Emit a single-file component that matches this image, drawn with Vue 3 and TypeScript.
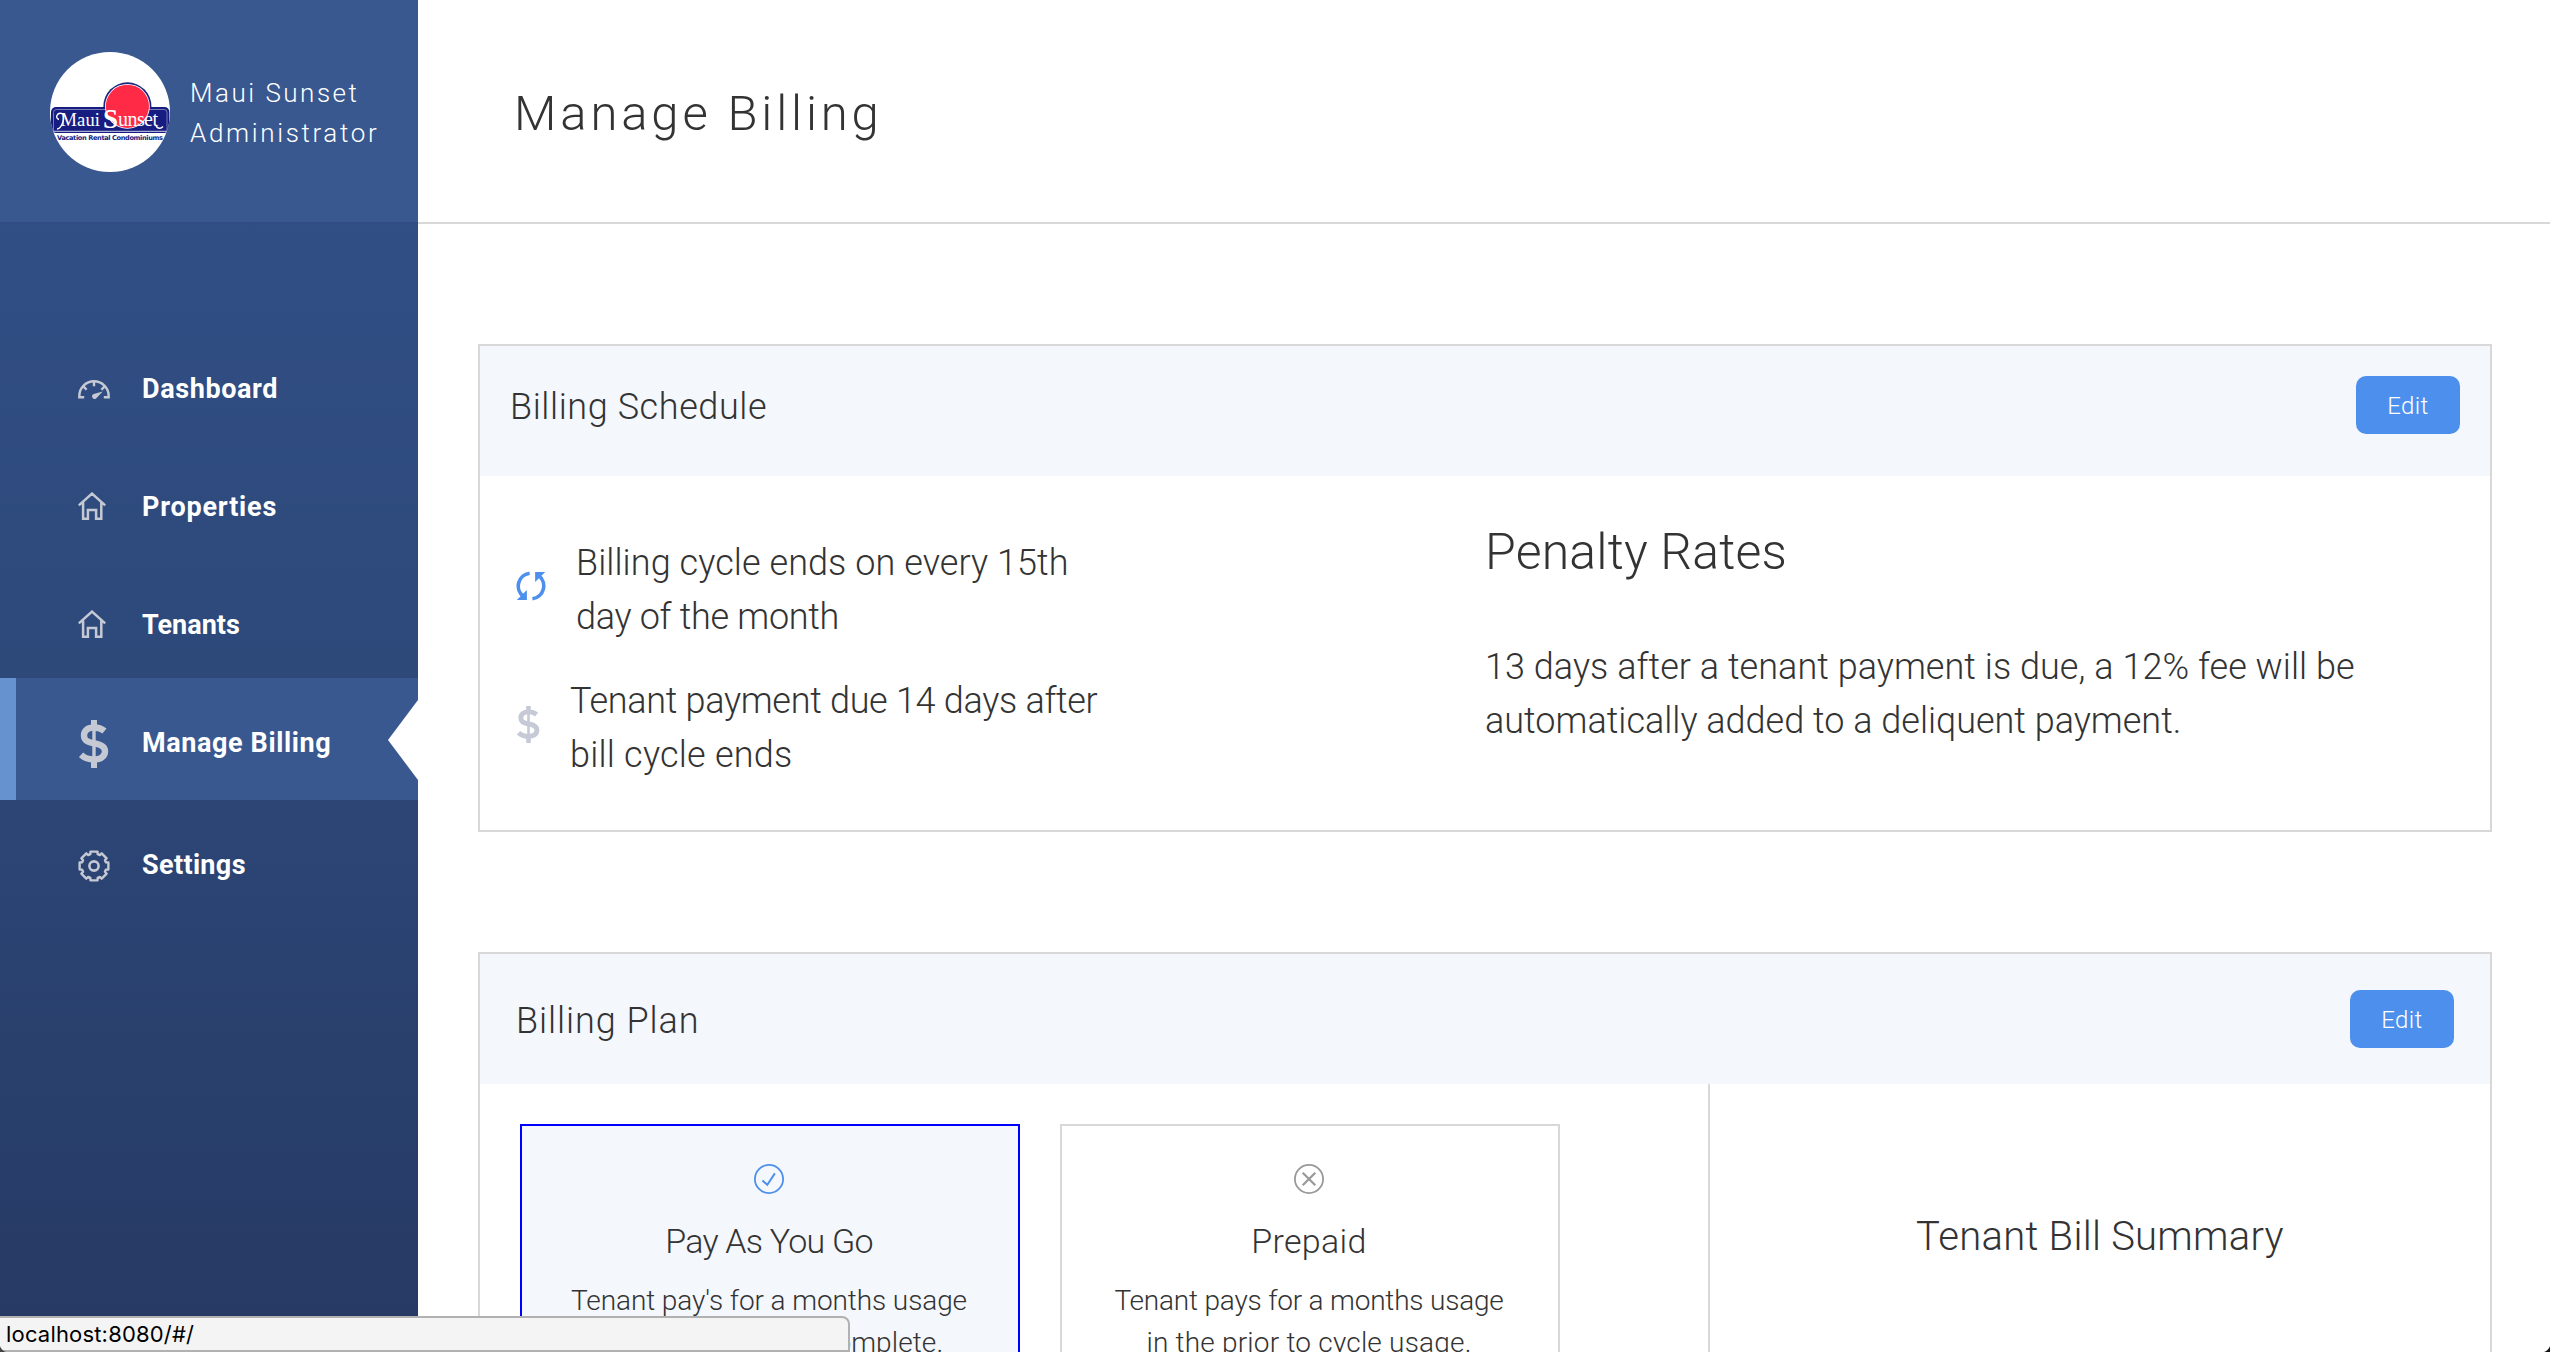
<script setup lang="ts">
type IconName = 'gauge' | 'house' | 'dollar' | 'gear'

interface NavItem {
  label: string
  icon: IconName
  active?: boolean
}

interface Plan {
  id: string
  title: string
  lines: string[]
  selected: boolean
}

const navItems: NavItem[] = [
  { label: 'Dashboard', icon: 'gauge' },
  { label: 'Properties', icon: 'house' },
  { label: 'Tenants', icon: 'house' },
  { label: 'Manage Billing', icon: 'dollar', active: true },
  { label: 'Settings', icon: 'gear' },
]

const plans: Plan[] = [
  {
    id: 'payg',
    title: 'Pay As You Go',
    lines: ["Tenant pay's for a months usage", 'after the month is complete.'],
    selected: true,
  },
  {
    id: 'prepaid',
    title: 'Prepaid',
    lines: ['Tenant pays for a months usage', 'in the prior to cycle usage.'],
    selected: false,
  },
]

// Outline of the eight-toothed gear, centred in a 32x32 box.
function gearPath(): string {
  const step = Math.PI / 4
  const points: string[] = []
  const add = (radius: number, angle: number) => {
    points.push(`${(16 + radius * Math.sin(angle)).toFixed(2)} ${(16 - radius * Math.cos(angle)).toFixed(2)}`)
  }
  for (let i = 0; i < 8; i++) {
    const a = i * step
    add(12.4, a - 0.3)
    add(14.8, a - 0.24)
    add(14.8, a + 0.24)
    add(12.4, a + 0.3)
  }
  return `M${points.join('L')}Z`
}

const gear = gearPath()
</script>

<template>
  <div class="app">
    <aside class="sidebar">
      <div class="profile">
        <svg class="logo" width="120" height="120" viewBox="0 0 120 120">
          <defs>
            <clipPath id="logo-clip"><circle cx="60" cy="60" r="60" /></clipPath>
          </defs>
          <g clip-path="url(#logo-clip)">
            <rect width="120" height="120" fill="#fff" />
            <circle cx="77.4" cy="54.3" r="24" fill="#1a237e" />
            <rect x="1" y="55" width="118.4" height="26" rx="5" fill="#161c80" />
            <path d="M3.5 79V60.5q0-3 3-3H114q3 0 3 3V79" fill="none" stroke="#8f94c4" stroke-width="0.8" />
            <path d="M1 79.3H119" stroke="#fff" stroke-width="0.8" />
            <circle cx="77.4" cy="54.3" r="22.4" fill="#fff" />
            <circle cx="77.4" cy="54.3" r="21.6" fill="#ff2a45" />
            <path d="M13 62C7 59.500 4.500 66 9 67.500M13 62C15 68 11 77 7 77M106 74C108 77 111 77 113 74.500" fill="none" stroke="#fff" stroke-width="1.400" />
            <g class="logo-name">
              <text x="10.500" y="73.500" font-size="18.500" textLength="39.500">Maui</text>
              <text x="53" y="76" font-size="27" font-weight="700" textLength="16">S</text>
              <text x="68" y="73.500" font-size="20" textLength="40">unset</text>
            </g>
            <text class="logo-tag" x="7" y="87.800" textLength="106">Vacation Rental Condominiums</text>
          </g>
        </svg>
        <div class="profile-name">
          <span class="org">Maui Sunset</span>
          <span class="role">Administrator</span>
        </div>
      </div>

      <nav class="nav">
        <a v-for="item in navItems" :key="item.label" class="nav-item" :class="[item.label.toLowerCase().replace(' ', '-'), { active: item.active }]">
          <span class="nav-icon">
            <svg v-if="item.icon === 'gauge'" width="32" height="20" viewBox="0 0 32 20">
              <path d="M6.200 17.300H1.300V16A14.700 14.700 0 0 1 30.700 16V17.300H25.800M16 1.500V6.300M5.600 6.600L8.600 9.800M26.400 6.600L23.400 9.800" fill="none" stroke="currentColor" stroke-width="2.400" />
              <path d="M24.700 11.400L15.600 14A2.600 2.600 0 1 0 17.900 18.700Z" fill="currentColor" />
            </svg>
            <svg v-else-if="item.icon === 'house'" class="house" width="28" height="28" viewBox="0 0 28 28">
              <path d="M0.800 13.400L14 1.600L27.200 13.400M5.100 10.500V26.700H9.900V18H18.100V26.700H23.300V10.500" fill="none" stroke="currentColor" stroke-width="2.500" />
            </svg>
            <svg v-else-if="item.icon === 'dollar'" class="dollar" width="30" height="48" viewBox="0 0 30 48">
              <path d="M25.500 11C22.500 8.500 19 7.500 15 7.500C9 7.500 5 10.500 5 15.500C5 20.500 8.500 22.300 15 23.300C22 24.300 26 26.300 26 31.300C26 36.800 21.500 39.500 15 39.500C9.500 39.500 5.500 38 2 34.800" fill="none" stroke="currentColor" stroke-width="6.400" />
              <path d="M12 0H18V6H16.700V42H18V48H12V42H13.300V6H12Z" fill="currentColor" />
            </svg>
            <svg v-else width="32" height="32" viewBox="0 0 32 32">
              <g fill="none" stroke="currentColor" stroke-linejoin="round">
                <path :d="gear" stroke-width="2.400" />
                <circle cx="16" cy="16" r="4.600" stroke-width="2.600" />
              </g>
            </svg>
          </span>
          <span class="nav-label">{{ item.label }}</span>
        </a>
      </nav>
    </aside>

    <main class="main">
      <header class="page-head"><h1>Manage Billing</h1></header>

      <div class="content">
        <section class="card schedule">
          <div class="card-head">
            <h2>Billing Schedule</h2>
            <button type="button" class="edit">Edit</button>
          </div>
          <div class="schedule-body">
            <div class="terms">
              <div class="term cycle">
                <svg width="30" height="30" viewBox="0 0 30 30">
                  <path d="M13.600 2.200A13 13 0 0 0 7.500 25.500" fill="none" stroke="#4d8fec" stroke-width="3.600" />
                  <path d="M0.800 28.900H10.900V19Z" fill="#4d8fec" />
                  <g transform="rotate(180 15 15)">
                    <path d="M13.600 2.200A13 13 0 0 0 7.500 25.500" fill="none" stroke="#4d8fec" stroke-width="3.600" />
                    <path d="M0.800 28.900H10.900V19Z" fill="#4d8fec" />
                  </g>
                </svg>
                <p><span class="l1">Billing cycle ends on every 15th</span><span class="l2">day of the month</span></p>
              </div>
              <div class="term due">
                <svg width="23" height="37" viewBox="0 0 30 48">
                  <path d="M25.500 11C22.500 8.500 19 7.500 15 7.500C9 7.500 5 10.500 5 15.500C5 20.500 8.500 22.300 15 23.300C22 24.300 26 26.300 26 31.300C26 36.800 21.500 39.500 15 39.500C9.500 39.500 5.500 38 2 34.800" fill="none" stroke="#c6cad6" stroke-width="6.400" />
                  <path d="M12 0H18V6H16.700V42H18V48H12V42H13.300V6H12Z" fill="#c6cad6" />
                </svg>
                <p><span class="l1">Tenant payment due 14 days after</span><span class="l2">bill cycle ends</span></p>
              </div>
            </div>
            <div class="penalty">
              <h3>Penalty Rates</h3>
              <p><span class="l1">13 days after a tenant payment is due, a 12% fee will be</span><span class="l2">automatically added to a deliquent payment.</span></p>
            </div>
          </div>
        </section>

        <section class="card plan">
          <div class="card-head">
            <h2>Billing Plan</h2>
            <button type="button" class="edit">Edit</button>
          </div>
          <div class="plan-body">
            <div class="options">
              <article v-for="plan in plans" :key="plan.id" class="option" :class="[plan.id, { selected: plan.selected }]">
                <svg width="30" height="30" viewBox="0 0 30 30" fill="none" stroke="currentColor">
                  <circle cx="15" cy="15" r="14.100" stroke-width="1.800" />
                  <path v-if="plan.selected" d="M8.400 16.500L13.300 20.800L20.900 9.400" stroke-width="1.900" />
                  <path v-else d="M8.700 8.700L21.300 21.300M21.300 8.700L8.700 21.300" stroke-width="2.200" />
                </svg>
                <h4>{{ plan.title }}</h4>
                <p><span v-for="(line, i) in plan.lines" :key="line" :class="`l${i + 1}`">{{ line }}</span></p>
              </article>
            </div>
            <div class="summary"><h3>Tenant Bill Summary</h3></div>
          </div>
        </section>
      </div>
    </main>

    <div class="status"><span>localhost:8080/#/</span></div>
    <i class="corner left"></i>
    <i class="corner right"></i>
  </div>
</template>

<style>
html,
body {
  overflow: hidden;
  background: #fff;
}
</style>

<style scoped>
.app {
  position: relative;
  display: flex;
  width: 2550px;
  height: 1352px;
  overflow: hidden;
  color: #333;
  font-family: Roboto, "Liberation Sans", sans-serif;
  font-weight: 300;
}

h1, h2, h3, h4, p {
  margin: 0;
  font-weight: 300;
}

p span {
  display: block;
  white-space: nowrap;
}

/* sidebar */
.sidebar {
  flex: none;
  width: 418px;
  background: linear-gradient(#335089, #2e4a7c 45%, #263963);
}

.profile {
  display: flex;
  align-items: flex-start;
  box-sizing: border-box;
  height: 222px;
  padding: 52px 0 0 50px;
  background: #39588f;
}

.logo {
  flex: none;
}

.logo-name {
  fill: #fff;
  font-family: "Liberation Serif", serif;
}

.logo-tag {
  fill: #161c80;
  font: 700 6.6px "DejaVu Sans", sans-serif;
}

.profile-name {
  display: flex;
  flex-direction: column;
  margin: 21px 0 0 20px;
  color: #fff;
  font-size: 26px;
  line-height: 40px;
}

.org { letter-spacing: 2.5px; }
.role { letter-spacing: 2.65px; }

.nav {
  padding-top: 102px;
}

.nav-item {
  position: relative;
  display: flex;
  box-sizing: border-box;
  height: 118px;
  padding: 45px 0 0 78px;
}

.nav-item.active {
  height: 122px;
  padding-left: 62px;
  border-left: 16px solid #6692d0;
  background: #39588f;
}

.nav-item.active::after {
  position: absolute;
  top: 22px;
  right: 0;
  width: 30px;
  height: 80px;
  background: #fff;
  clip-path: polygon(100% 0, 0 50%, 100% 100%);
  content: "";
}

.nav-icon {
  display: flex;
  align-items: center;
  width: 32px;
  height: 42px;
  color: #c5c9d4;
}

.nav-icon svg { flex: none; }
.dollar { margin-left: 1px; }
.house { margin-bottom: 4px; }

.nav-label {
  margin-left: 32px;
  color: #fff;
  font-size: 27px;
  font-weight: 700;
  line-height: 40px;
  letter-spacing: 0.6px;
}

.properties .nav-label { letter-spacing: 0.79px; }
.tenants .nav-label { letter-spacing: 0; }
.settings .nav-label { letter-spacing: 0.35px; }

/* page header */
.main {
  flex: 1;
  min-width: 0;
}

.page-head {
  box-sizing: border-box;
  height: 224px;
  padding: 84px 0 0 96px;
  border-bottom: 2px solid #d8d8d8;
}

h1 {
  font-size: 49px;
  line-height: 60px;
  letter-spacing: 3.86px;
}

.content {
  display: flex;
  flex-direction: column;
  gap: 120px;
  padding: 120px 58px 0 60px;
}

.card {
  border: 2px solid #d8d8d8;
}

.card-head {
  display: flex;
  align-items: flex-start;
  justify-content: space-between;
  box-sizing: border-box;
  height: 130px;
  padding: 30px 30px 0 30px;
  background: #f4f7fc;
}

.plan .card-head { padding: 36px 36px 0 36px; }

h2 {
  padding-top: 2px;
  font-size: 36px;
  line-height: 58px;
}

.schedule h2 { letter-spacing: 0.59px; }
.plan h2 { letter-spacing: 0.93px; }

.edit {
  width: 104px;
  height: 58px;
  padding: 2px 0 0;
  border: 0;
  border-radius: 10px;
  background: #4d8fec;
  color: #fff;
  font: 300 24px/56px Roboto, sans-serif;
  letter-spacing: 0.38px;
}

/* billing schedule */
.schedule-body {
  display: grid;
  grid-template-columns: 1fr 1fr;
  height: 354px;
}

.terms {
  display: flex;
  flex-direction: column;
  gap: 30px;
  padding: 60px 0 0 36px;
}

.term {
  display: flex;
  align-items: center;
  font-size: 36px;
  line-height: 54px;
}

.cycle { gap: 30px; }
.cycle svg { margin-top: -8px; }
.due { gap: 30px; padding-left: 1px; }
.due svg { margin-top: -8px; }
.cycle .l1 { letter-spacing: 0.07px; }
.cycle .l2 { letter-spacing: -0.3px; }
.due .l1 { letter-spacing: -0.3px; }
.due .l2 { letter-spacing: 0.22px; }

.penalty { padding-top: 46px; }

.penalty h3 {
  font-size: 50px;
  line-height: 60px;
  letter-spacing: 0.18px;
}

.penalty p {
  margin-top: 58px;
  font-size: 36px;
  line-height: 54px;
}

.penalty .l1 { letter-spacing: 0.04px; }

/* billing plan */
.plan-body {
  display: flex;
  height: 420px;
}

.options {
  display: flex;
  flex: none;
  gap: 40px;
  box-sizing: border-box;
  width: 1228px;
  padding: 40px 0 0 40px;
}

.option {
  display: flex;
  flex-direction: column;
  align-items: center;
  box-sizing: border-box;
  width: 500px;
  padding: 38px 2px 0 0;
  border: 2px solid #d8d8d8;
  text-align: center;
}

.option.selected {
  border-color: #00f;
  background: #f4f7fc;
}

.option svg { flex: none; color: #999; }
.option.selected svg { color: #4d8fec; }

h4 {
  margin-top: 27px;
  font-size: 34px;
  line-height: 40px;
}

.option p {
  margin-top: 19px;
  font-size: 28px;
  line-height: 42px;
}

.payg h4 { letter-spacing: -0.79px; }
.prepaid h4 { letter-spacing: 0.3px; }
.payg .l1 { letter-spacing: -0.1px; }
.payg .l2 { letter-spacing: 0.1px; }
.prepaid .l1 { letter-spacing: -0.2px; }
.prepaid .l2 { letter-spacing: 0.2px; }

.summary {
  flex: 1;
  padding-top: 123px;
  border-left: 2px solid #d8d8d8;
  text-align: center;
}

.summary h3 {
  font-size: 40px;
  line-height: 60px;
  letter-spacing: 0.26px;
}

/* browser status bubble */
.status {
  position: absolute;
  bottom: 0;
  left: 0;
  box-sizing: border-box;
  width: 850px;
  height: 36px;
  padding-left: 6px;
  border: solid #b1b1b1;
  border-width: 2px 2px 2px 0;
  border-top-right-radius: 8px;
  background: #f4f4f4;
  color: #000;
  font: 400 22px/32px Inter, "Liberation Sans", sans-serif;
  letter-spacing: 0.18px;
}

.corner {
  position: absolute;
  bottom: 0;
  width: 9px;
  height: 9px;
}

.corner.left {
  left: 0;
  background: radial-gradient(circle at 100% 0, transparent 9px, #444 10px);
}

.corner.right {
  right: 0;
  background: radial-gradient(circle at 0 0, transparent 9px, #111 10px);
}
</style>
